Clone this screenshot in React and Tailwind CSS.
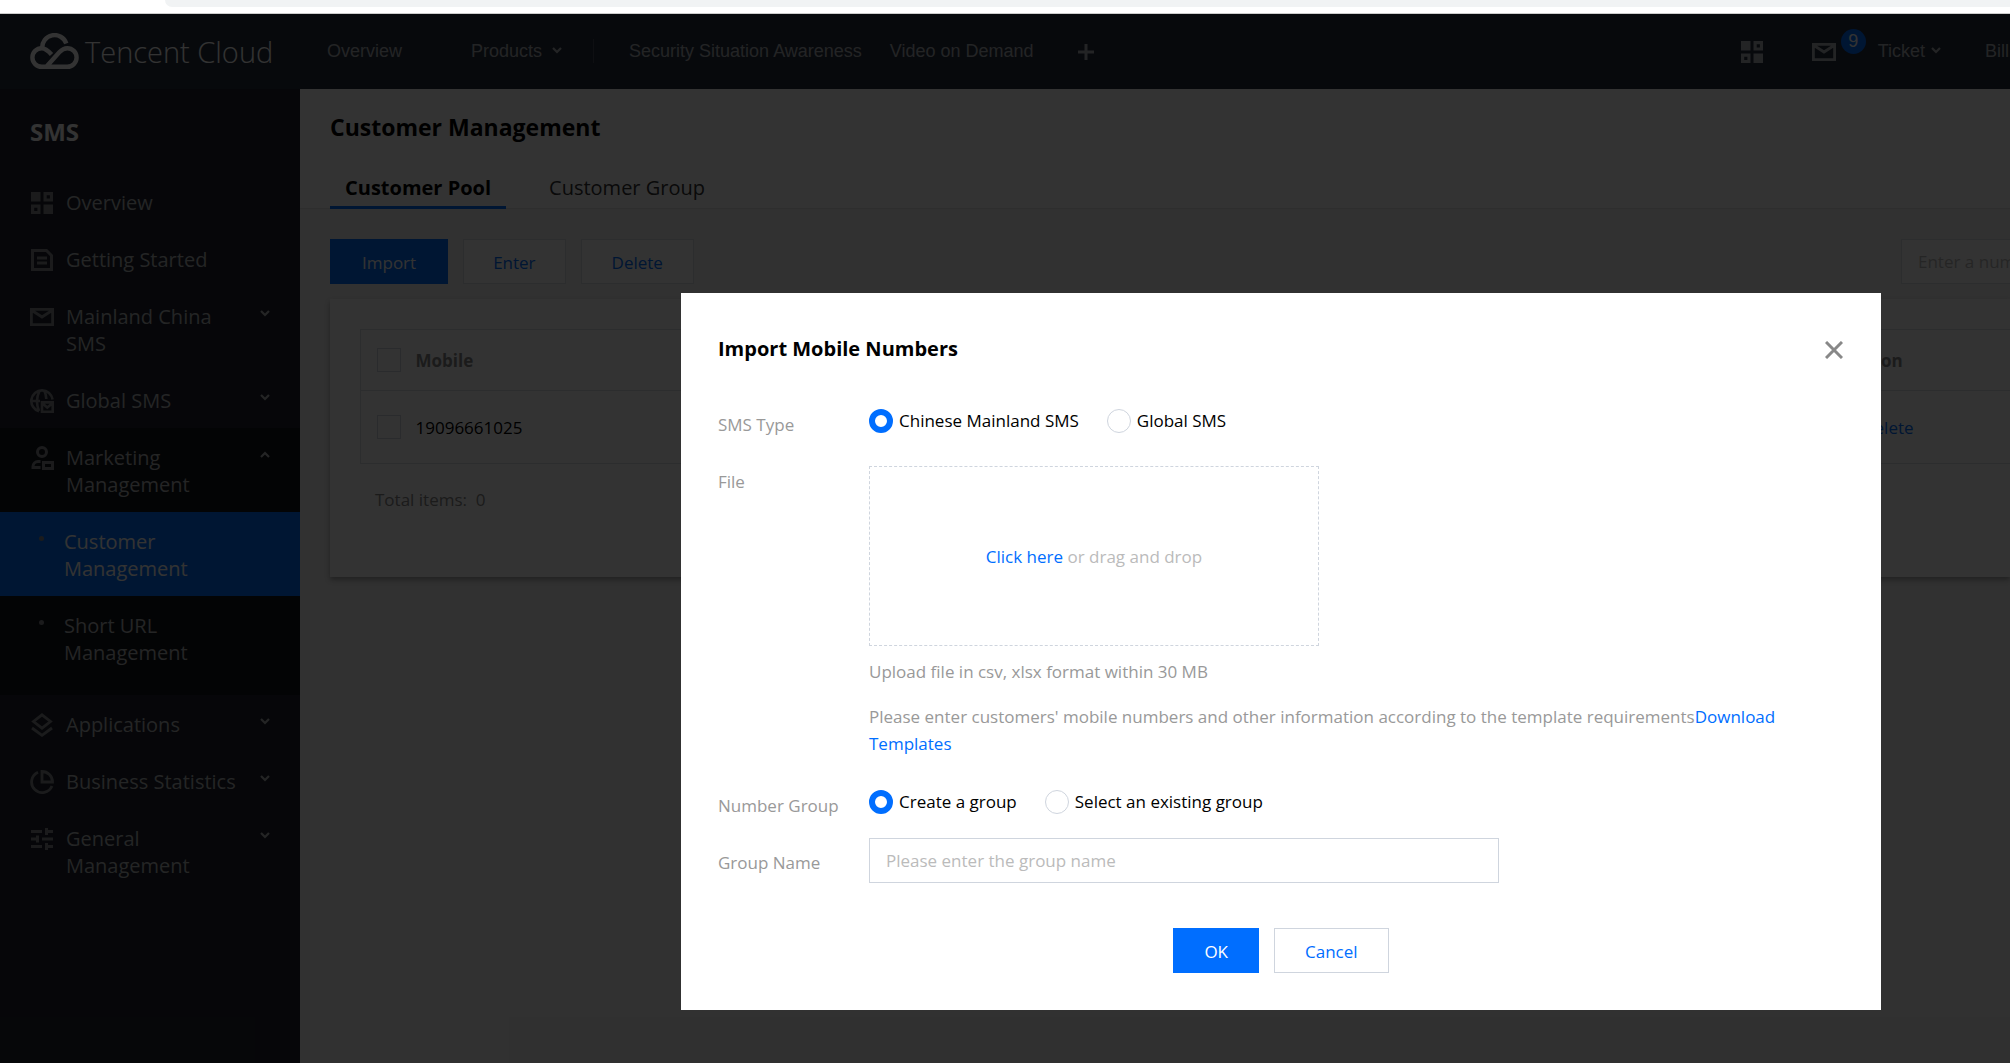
import React, { useState } from 'react';

const Chevron = ({ up = false, className = '' }) => (
  <svg viewBox="0 0 10 7" className={`h-[7px] w-[10px] shrink-0 ${up ? 'rotate-180' : ''} ${className}`} fill="none" stroke="currentColor" strokeWidth="2.2">
    <path d="M1 1l4 4 4-4" />
  </svg>
);

const GridIcon = () => (
  <svg viewBox="0 0 24 24" className="h-6 w-6 shrink-0" fill="currentColor" fillRule="evenodd">
    <path d="M1 1h9.500v9.500H1zM13.500 1H23v9.500h-9.500zM16.700 4.200v3.200h3.200V4.200zM1 13.500h9.500V23H1zM4.200 16.700v3.200h3.200v-3.200zM13.500 13.500H23V23h-9.500z" />
  </svg>
);

const DocIcon = () => (
  <svg viewBox="0 0 24 24" className="h-6 w-6 shrink-0" fill="none" stroke="currentColor" strokeWidth="3">
    <path d="M2.5 2.5h14l5 5v14h-19zM7 10h10M7 15h10" />
  </svg>
);

const MailIcon = () => (
  <svg viewBox="0 0 24 24" className="h-6 w-6 shrink-0" fill="none" stroke="currentColor" strokeWidth="2.8">
    <path d="M1.4 4.4h21.2v15.2H1.4zM2 5.5l10 6.5 10-6.5" />
  </svg>
);

const GlobeIcon = () => (
  <svg viewBox="0 0 24 24" className="h-6 w-6 shrink-0" fill="none" stroke="currentColor" strokeWidth="2.6">
    <path d="M9 22.3A10.7 10.7 0 1 1 22.6 10.5M1.5 12H10M9 22C6.5 16 6.500 8 9.5 2M14.5 2c1 2.500 1.700 5 1.800 8" />
    <path d="M12 13.4h10.700v9.300H12zM12.5 14.5l4.800 4 4.800-4" />
  </svg>
);

const UserIcon = () => (
  <svg viewBox="0 0 24 24" className="h-6 w-6 shrink-0" fill="none" stroke="currentColor" strokeWidth="3">
    <circle cx="12" cy="6" r="4.5" />
    <path d="M10.5 15.5H8a5 5 0 0 0-5 5v1h7.500M13.5 16.500h9v6h-9z" />
  </svg>
);

const LayersIcon = () => (
  <svg viewBox="0 0 24 24" className="h-6 w-6 shrink-0" fill="none" stroke="currentColor" strokeWidth="2.8">
    <path d="M12 1.800l8.500 6.700-8.500 6.700-8.500-6.700zM2 15l10 7.300L22 15" />
  </svg>
);

const PieIcon = () => (
  <svg viewBox="0 0 24 24" className="h-6 w-6 shrink-0" fill="none" stroke="currentColor" strokeWidth="2.8">
    <path d="M8 2.200A10.600 10.600 0 1 0 22 16" />
    <path d="M12 1.500V12h10.500A10.500 10.500 0 0 0 12 1.500z" />
  </svg>
);

const SlidersIcon = () => (
  <svg viewBox="0 0 24 24" className="h-6 w-6 shrink-0" fill="none" stroke="currentColor" strokeWidth="3">
    <path d="M1 4.500h11M15 4.500h8M16.500 1v7M1 12h8M12 12h11M7.500 8.500v7M1 19.500h11M15 19.500h8M16.500 16v7" />
  </svg>
);

const CloudLogo = () => (
  <svg viewBox="0 0 49 36" className="h-9 w-[49px] shrink-0" fill="none" stroke="currentColor" strokeWidth="4.4">
    <path d="M12.200 15.500A12.400 12.400 0 0 1 36.300 10.500" />
    <path d="M21.500 21.500C18 17.500 15.500 15.200 11.700 15.200a9.300 9.300 0 0 0 0 18.600h25.600a9.300 9.300 0 0 0 0-18.600c-3.300 0-5.500 1.400-8 4L17 33" />
  </svg>
);

const menu = [
  { label: 'Overview', icon: GridIcon },
  { label: 'Getting Started', icon: DocIcon },
  { label: 'Mainland China SMS', icon: MailIcon, expandable: true },
  { label: 'Global SMS', icon: GlobeIcon, expandable: true },
  {
    label: 'Marketing Management',
    icon: UserIcon,
    expandable: true,
    children: [
      { label: 'Customer Management', active: true },
      { label: 'Short URL Management' }
    ]
  },
  { label: 'Applications', icon: LayersIcon, expandable: true },
  { label: 'Business Statistics', icon: PieIcon, expandable: true },
  { label: 'General Management', icon: SlidersIcon, expandable: true }
];

const Radio = ({ name, label, checked, onChange }) => (
  <label className="flex items-center gap-1.5 leading-6 text-black">
    <input
      type="radio"
      name={name}
      checked={checked}
      onChange={onChange}
      className="h-6 w-6 shrink-0 appearance-none rounded-full border border-[#cfd5de] bg-white checked:border-[6px] checked:border-[#006eff]"
    />
    {label}
  </label>
);

const Checkbox = ({ label }) => (
  <input type="checkbox" aria-label={label} className="block h-6 w-6 appearance-none border border-[#cfd5de]" />
);

const Header = () => (
  <header className="flex h-[75px] shrink-0 items-center overflow-hidden bg-[#262f3e] pl-[30px] font-['Liberation_Sans',sans-serif] text-lg whitespace-nowrap text-[#b0b4ba]">
    <a href="#" className="flex w-[297px] shrink-0 items-center gap-1.5 text-white">
      <CloudLogo />
      <span className="font-['Open_Sans',sans-serif] text-[29px] font-light">Tencent Cloud</span>
    </a>
    <nav className="flex items-center pb-0.5">
      <a href="#">Overview</a>
      <a href="#" className="ml-[69px] flex items-center gap-2.5">Products <Chevron /></a>
      <span className="mr-[35px] ml-[31px] h-6 w-px bg-[#454d5a]" />
      <a href="#">Security Situation Awareness</a>
      <a href="#" className="ml-7">Video on Demand</a>
      <button aria-label="Add shortcut" className="ml-11 pt-0.5">
        <svg viewBox="0 0 16 16" className="h-4 w-4" stroke="currentColor" strokeWidth="3"><path d="M8 0v16M0 8h16" /></svg>
      </button>
    </nav>
    <div className="ml-auto flex items-center">
      <button aria-label="Apps"><GridIcon /></button>
      <button aria-label="Messages" className="relative ml-12">
        <MailIcon />
        <span className="absolute -top-[11px] left-[29px] h-[25px] w-[25px] rounded-full bg-[#006eff] leading-[25px] text-white">9</span>
      </button>
      <a href="#" className="ml-[42px] flex items-center gap-1.5 pb-0.5">Ticket <Chevron /></a>
      <a href="#" className="ml-[44px] w-[25px] pb-0.5">Bill</a>
    </div>
  </header>
);

const Sidebar = () => (
  <aside className="w-[300px] shrink-0 bg-[#1e222d] text-xl leading-[27px] text-[#b5b7bb]">
    <h2 className="flex h-[84px] items-center px-[30px] pt-0.5 text-2xl font-bold text-white">SMS</h2>
    <ul>
      {menu.map(({ label, icon: Icon, expandable, children }) => (
        <li key={label} className={children ? 'bg-[#12151c] pb-[15px]' : ''}>
          <a href="#" className="flex items-start px-[30px] pt-4 pb-3.5">
            <span className="flex h-[27px] items-center text-[#85888e]"><Icon /></span>
            <span className="ml-3 flex-1 pr-4">{label}</span>
            {expandable && <Chevron up={!!children} className="mt-[7px]" />}
          </a>
          {children && (
            <ul>
              {children.map((child) => (
                <li key={child.label}>
                  <a href="#" className={`flex items-start pt-4 pr-20 pb-3.5 pl-[39px] ${child.active ? 'bg-[#006eff] text-white' : ''}`}>
                    <span className="mt-2 mr-5 h-[5px] w-[5px] shrink-0 rounded-full bg-[#85888e]" />
                    {child.label}
                  </a>
                </li>
              ))}
            </ul>
          )}
        </li>
      ))}
    </ul>
  </aside>
);

const CustomerPage = () => (
  <main className="min-w-0 flex-1 overflow-hidden bg-[#f2f2f2] text-[17px] text-black">
    <div className="border-b border-[#e5e5e5] bg-white pl-[30px]">
      <h1 className="pt-[22px] text-[23px] leading-8 font-bold">Customer Management</h1>
      <div className="mt-[31px] flex gap-7 text-xl leading-[27px]">
        <button className="-mb-px border-b-[3px] border-[#006eff] px-[15px] pb-[5px] font-bold">Customer Pool</button>
        <button className="px-[15px] pb-[7px] text-[#333]">Customer Group</button>
      </div>
    </div>
    <div className="pt-[30px] pl-[30px]">
      <div className="flex gap-[15px]">
        <button className="h-[45px] bg-[#006eff] px-8 pt-0.5 text-white">Import</button>
        <button className="h-[45px] border border-[#dcdfe6] bg-white px-[29px] pt-0.5 text-[#006eff]">Enter</button>
        <button className="h-[45px] border border-[#dcdfe6] bg-white px-[30px] pt-0.5 text-[#006eff]">Delete</button>
        <input
          aria-label="Search"
          placeholder="Enter a num"
          className="ml-auto h-[45px] w-[109px] border border-r-0 border-[#dcdfe6] bg-white pl-4 placeholder:text-[#bbb]"
        />
      </div>
      <section className="mt-[15px] h-[278px] bg-white pt-[30px] pl-[30px] shadow-[0_3px_5px_rgba(0,0,0,0.3)]">
        <table className="w-full border-t border-l border-[#dcdfe6] text-left">
          <thead>
            <tr className="h-[61px] border-b border-[#dcdfe6] text-[#888]">
              <th className="w-[55px] pl-4"><Checkbox label="Select all" /></th>
              <th className="pt-0.5">Mobile</th>
              <th className="w-[194px] pt-0.5">Operation</th>
            </tr>
          </thead>
          <tbody>
            <tr className="h-[73px] border-b border-[#dcdfe6]">
              <td className="pl-4"><Checkbox label="Select 19096661025" /></td>
              <td className="pt-0.5">19096661025</td>
              <td className="pt-0.5">
                <div className="flex gap-4 text-[#006eff]">
                  <a href="#">Edit</a>
                  <a href="#">Delete</a>
                </div>
              </td>
            </tr>
          </tbody>
        </table>
        <p className="mt-[23px] ml-[15px] text-[#888]">Total items:&nbsp; 0</p>
      </section>
    </div>
  </main>
);

const ImportDialog = () => {
  const [smsType, setSmsType] = useState('mainland');
  const [groupMode, setGroupMode] = useState('create');

  return (
    <div role="dialog" aria-labelledby="dialog-title" className="w-[1200px] bg-white px-[37px] pt-[41px] pb-[37px] text-[17px] leading-[27px] text-[#999]">
      <div className="flex items-center justify-between">
        <h2 id="dialog-title" className="text-xl leading-[30px] font-bold text-black">Import Mobile Numbers</h2>
        <button aria-label="Close" className="pt-0.5 pr-px text-[#888]">
          <svg viewBox="0 0 18 18" className="h-[18px] w-[18px]" stroke="currentColor" strokeWidth="3"><path d="M1 1l16 16M17 1L1 17" /></svg>
        </button>
      </div>
      <form className="mt-[45px] grid grid-cols-[151px_1fr]">
        <span className="pt-0.5">SMS Type</span>
        <div className="flex h-[57px] items-start gap-7">
          <Radio name="sms-type" label="Chinese Mainland SMS" checked={smsType === 'mainland'} onChange={() => setSmsType('mainland')} />
          <Radio name="sms-type" label="Global SMS" checked={smsType === 'global'} onChange={() => setSmsType('global')} />
        </div>

        <span className="pt-0.5">File</span>
        <div className="pb-[33px]">
          <div className="flex h-[180px] w-[450px] items-center justify-center border border-dashed border-[#cfd5de] text-[#bbb]">
            <p><button type="button" className="text-[#006eff]">Click here</button> or drag and drop</p>
          </div>
          <p className="mt-3">Upload file in csv, xlsx format within 30 MB</p>
          <p className="mt-[18px] pr-16">
            Please enter customers' mobile numbers and other information according to the template requirements
            <a href="#" className="text-[#006eff]">Download Templates</a>
          </p>
        </div>

        <span className="pt-0.5">Number Group</span>
        <div className="flex h-12 items-start gap-7">
          <Radio name="group-mode" label="Create a group" checked={groupMode === 'create'} onChange={() => setGroupMode('create')} />
          <Radio name="group-mode" label="Select an existing group" checked={groupMode === 'existing'} onChange={() => setGroupMode('existing')} />
        </div>

        <label htmlFor="group-name" className="pt-[11px]">Group Name</label>
        <input id="group-name" placeholder="Please enter the group name" className="h-[45px] w-[630px] border border-[#cfd5de] px-4 text-black placeholder:text-[#bbb]" />
      </form>
      <div className="mt-[45px] flex justify-center gap-[15px]">
        <button className="h-[45px] bg-[#006eff] px-[31px] pt-0.5 text-white">OK</button>
        <button className="h-[45px] border border-[#cfd5de] px-[30px] pt-0.5 text-[#006eff]">Cancel</button>
      </div>
    </div>
  );
};

export default function App() {
  return (
    <div className="flex h-screen flex-col overflow-hidden bg-white font-['Open_Sans',sans-serif]">
      <div className="h-3.5 shrink-0 border-b border-[#ccc] pl-[165px]">
        <div className="h-[7px] rounded-bl-2xl bg-[#f1f3f4]" />
      </div>
      <div className="relative flex min-h-0 flex-1 flex-col">
        <Header />
        <div className="flex min-h-0 flex-1">
          <Sidebar />
          <CustomerPage />
        </div>
        <div className="absolute inset-0 flex items-start justify-end bg-black/80 pt-[279px] pr-[129px]">
          <ImportDialog />
        </div>
      </div>
    </div>
  );
}
